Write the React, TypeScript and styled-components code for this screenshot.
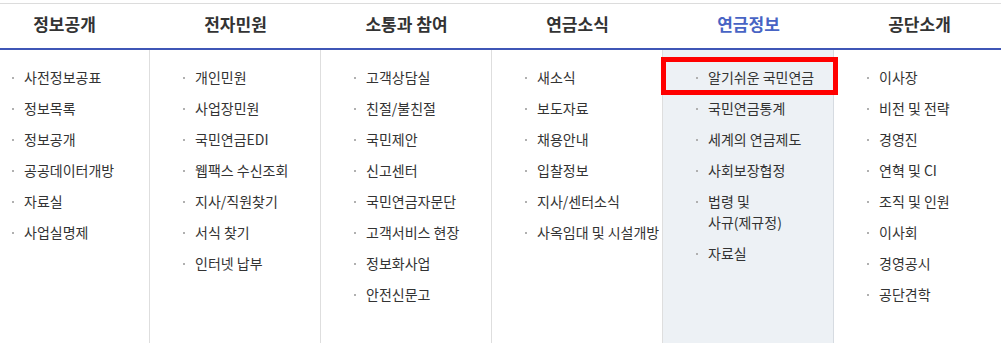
import React from 'react';
import styled, {createGlobalStyle} from 'styled-components';

const GlobalStyle = createGlobalStyle`
  html, body {
    margin: 0;
    padding: 0;
    background: #fff;
    overflow: hidden;
  }
  body {
    font-family: 'Noto Sans CJK KR', 'Noto Sans', sans-serif;
    color: #333;
  }
`;

type Menu = {title: string; items: string[]; active?: boolean};

const menus: Menu[] = [
  {
    title: '정보공개',
    items: ['사전정보공표', '정보목록', '정보공개', '공공데이터개방', '자료실', '사업실명제'],
  },
  {
    title: '전자민원',
    items: ['개인민원', '사업장민원', '국민연금EDI', '웹팩스 수신조회', '지사/직원찾기', '서식 찾기', '인터넷 납부'],
  },
  {
    title: '소통과 참여',
    items: ['고객상담실', '친절/불친절', '국민제안', '신고센터', '국민연금자문단', '고객서비스 현장', '정보화사업', '안전신문고'],
  },
  {
    title: '연금소식',
    items: ['새소식', '보도자료', '채용안내', '입찰정보', '지사/센터소식', '사옥임대 및 시설개방'],
  },
  {
    title: '연금정보',
    active: true,
    items: ['알기쉬운 국민연금', '국민연금통계', '세계의 연금제도', '사회보장협정', '법령 및\n사규(제규정)', '자료실'],
  },
  {
    title: '공단소개',
    items: ['이사장', '비전 및 전략', '경영진', '연혁 및 CI', '조직 및 인원', '이사회', '경영공시', '공단견학'],
  },
];

const Wrap = styled.div`
  width: 1026px;
  margin-left: -21px;
  padding-top: 3px;
`;

const Header = styled.div`
  display: grid;
  grid-template-columns: repeat(6, 171px);
  border-top: 1px solid #dcdcdc;
  border-bottom: 2px solid #3f56b6;
`;

const Title = styled.div<{$active?: boolean}>`
  height: 40px;
  padding-bottom: 4px;
  line-height: 40px;
  text-align: center;
  font-size: 17px;
  font-weight: 700;
  color: ${(p) => (p.$active ? '#4864c4' : '#333')};
`;

const Body = styled.div`
  display: grid;
  grid-template-columns: repeat(6, 171px);
  height: 300px;
`;

const Column = styled.ul<{$active?: boolean}>`
  position: relative;
  margin: 0;
  padding: 17px 0 0 33px;
  list-style: none;
  border-right: 1px solid ${(p) => (p.$active ? '#d6dbe1' : '#dedede')};
  background: ${(p) => (p.$active ? '#edf1f5' : '#fff')};
  &:last-child {
    border-right: none;
  }
`;

const Item = styled.li`
  display: flex;
  align-items: flex-start;
  margin-bottom: 10px;
  font-size: 14px;
  line-height: 21px;
  color: #333;
  white-space: pre;

  &::before {
    content: '';
    flex: none;
    width: 2px;
    height: 2px;
    margin: 10px 10px 0 0;
    background: #b0b0b0;
  }
`;

const Highlight = styled.div`
  position: absolute;
  z-index: 1;
  left: -2px;
  top: 7px;
  width: 177px;
  height: 38px;
  box-sizing: border-box;
  border: 5px solid #ff0000;
`;

export default function App() {
  return (
    <>
      <GlobalStyle />
      <Wrap>
        <Header>
          {menus.map((m) => (
            <Title key={m.title} $active={m.active}>
              {m.title}
            </Title>
          ))}
        </Header>
        <Body>
          {menus.map((m) => (
            <Column key={m.title} $active={m.active}>
              {m.items.map((it) => (
                <Item key={it}>{it}</Item>
              ))}
              {m.active && <Highlight />}
            </Column>
          ))}
        </Body>
      </Wrap>
    </>
  );
}
